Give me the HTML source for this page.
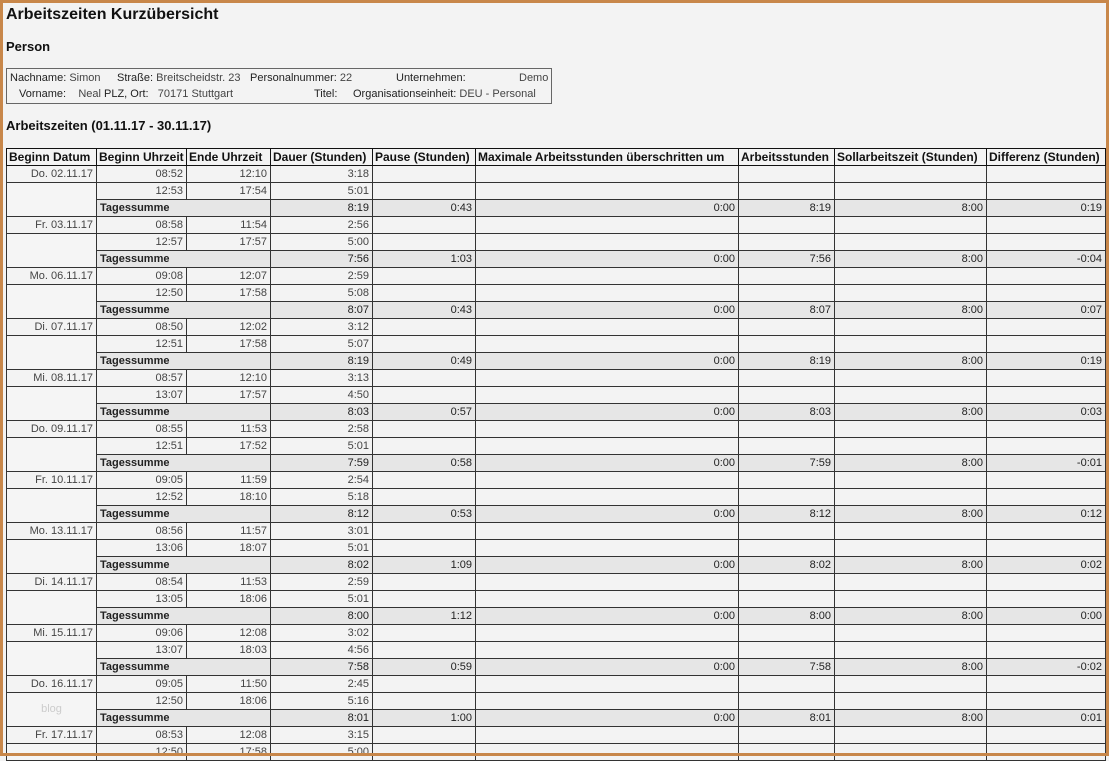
<!DOCTYPE html>
<html><head><meta charset="utf-8"><style>
html,body{margin:0;padding:0}
body{width:1109px;height:756px;overflow:hidden;background:#f3f3f3;font-family:"Liberation Sans",Arial,sans-serif;color:#222;position:relative}
.frame{position:absolute;left:0;top:0;width:1103px;height:750px;border:3px solid #c8874a;box-sizing:content-box;pointer-events:none;z-index:5}
h1{position:absolute;left:6px;top:6px;margin:0;font-size:16px;font-weight:bold;color:#111}
h2{position:absolute;left:6px;margin:0;font-size:13px;font-weight:bold;color:#111}
.info{position:absolute;left:6px;top:68px;width:544px;height:34px;border:1px solid #666;font-size:11px;color:#444}
.info span{position:absolute;white-space:nowrap}
.info b{font-weight:normal;color:#222}
table{position:absolute;left:6px;top:148px;border-collapse:collapse;table-layout:fixed;width:1099px;font-size:11px}
td,th{border:1px solid #333;padding:0 3px;height:16px;line-height:15px;white-space:nowrap;overflow:hidden;text-align:right;color:#444}
th{text-align:left;color:#111;font-weight:bold;border-color:#111;font-size:12px;padding:0 2px}
tr.s td{background:#e6e6e6;color:#222}
tr.s td.l{text-align:left;font-weight:bold}
td.d{background:#f5f5f5;vertical-align:top}
</style></head><body>
<div class="frame"></div>
<h1>Arbeitszeiten Kurzübersicht</h1>
<h2 style="top:39px">Person</h2>
<div class="info">
<span style="left:3px;top:3px"><b>Nachname:</b> Simon</span>
<span style="left:110px;top:3px"><b>Straße:</b> Breitscheidstr. 23</span>
<span style="left:243px;top:3px"><b>Personalnummer:</b> 22</span>
<span style="left:389px;top:3px"><b>Unternehmen:</b></span>
<span style="left:512px;top:3px">Demo</span>
<span style="left:12px;top:19px"><b>Vorname:</b>&nbsp;&nbsp;&nbsp; Neal <b>PLZ, Ort:</b>&nbsp;&nbsp; 70171 Stuttgart</span>
<span style="left:307px;top:19px"><b>Titel:</b></span>
<span style="left:346px;top:19px"><b>Organisationseinheit:</b> DEU - Personal</span>
</div>
<h2 style="top:118px">Arbeitszeiten (01.11.17 - 30.11.17)</h2>
<table>
<colgroup><col style="width:90px"><col style="width:90px"><col style="width:84px"><col style="width:102px"><col style="width:103px"><col style="width:263px"><col style="width:96px"><col style="width:152px"><col style="width:119px"></colgroup>
<tr><th>Beginn Datum</th><th>Beginn Uhrzeit</th><th>Ende Uhrzeit</th><th>Dauer (Stunden)</th><th>Pause (Stunden)</th><th>Maximale Arbeitsstunden überschritten um</th><th>Arbeitsstunden</th><th>Sollarbeitszeit (Stunden)</th><th>Differenz (Stunden)</th></tr>

<tr><td>Do. 02.11.17</td><td>08:52</td><td>12:10</td><td>3:18</td><td></td><td></td><td></td><td></td><td></td></tr>
<tr><td class="d" rowspan="2"></td><td>12:53</td><td>17:54</td><td>5:01</td><td></td><td></td><td></td><td></td><td></td></tr>
<tr class="s"><td class="l" colspan="2">Tagessumme</td><td>8:19</td><td>0:43</td><td>0:00</td><td>8:19</td><td>8:00</td><td>0:19</td></tr>

<tr><td>Fr. 03.11.17</td><td>08:58</td><td>11:54</td><td>2:56</td><td></td><td></td><td></td><td></td><td></td></tr>
<tr><td class="d" rowspan="2"></td><td>12:57</td><td>17:57</td><td>5:00</td><td></td><td></td><td></td><td></td><td></td></tr>
<tr class="s"><td class="l" colspan="2">Tagessumme</td><td>7:56</td><td>1:03</td><td>0:00</td><td>7:56</td><td>8:00</td><td>-0:04</td></tr>

<tr><td>Mo. 06.11.17</td><td>09:08</td><td>12:07</td><td>2:59</td><td></td><td></td><td></td><td></td><td></td></tr>
<tr><td class="d" rowspan="2"></td><td>12:50</td><td>17:58</td><td>5:08</td><td></td><td></td><td></td><td></td><td></td></tr>
<tr class="s"><td class="l" colspan="2">Tagessumme</td><td>8:07</td><td>0:43</td><td>0:00</td><td>8:07</td><td>8:00</td><td>0:07</td></tr>

<tr><td>Di. 07.11.17</td><td>08:50</td><td>12:02</td><td>3:12</td><td></td><td></td><td></td><td></td><td></td></tr>
<tr><td class="d" rowspan="2"></td><td>12:51</td><td>17:58</td><td>5:07</td><td></td><td></td><td></td><td></td><td></td></tr>
<tr class="s"><td class="l" colspan="2">Tagessumme</td><td>8:19</td><td>0:49</td><td>0:00</td><td>8:19</td><td>8:00</td><td>0:19</td></tr>

<tr><td>Mi. 08.11.17</td><td>08:57</td><td>12:10</td><td>3:13</td><td></td><td></td><td></td><td></td><td></td></tr>
<tr><td class="d" rowspan="2"></td><td>13:07</td><td>17:57</td><td>4:50</td><td></td><td></td><td></td><td></td><td></td></tr>
<tr class="s"><td class="l" colspan="2">Tagessumme</td><td>8:03</td><td>0:57</td><td>0:00</td><td>8:03</td><td>8:00</td><td>0:03</td></tr>

<tr><td>Do. 09.11.17</td><td>08:55</td><td>11:53</td><td>2:58</td><td></td><td></td><td></td><td></td><td></td></tr>
<tr><td class="d" rowspan="2"></td><td>12:51</td><td>17:52</td><td>5:01</td><td></td><td></td><td></td><td></td><td></td></tr>
<tr class="s"><td class="l" colspan="2">Tagessumme</td><td>7:59</td><td>0:58</td><td>0:00</td><td>7:59</td><td>8:00</td><td>-0:01</td></tr>

<tr><td>Fr. 10.11.17</td><td>09:05</td><td>11:59</td><td>2:54</td><td></td><td></td><td></td><td></td><td></td></tr>
<tr><td class="d" rowspan="2"></td><td>12:52</td><td>18:10</td><td>5:18</td><td></td><td></td><td></td><td></td><td></td></tr>
<tr class="s"><td class="l" colspan="2">Tagessumme</td><td>8:12</td><td>0:53</td><td>0:00</td><td>8:12</td><td>8:00</td><td>0:12</td></tr>

<tr><td>Mo. 13.11.17</td><td>08:56</td><td>11:57</td><td>3:01</td><td></td><td></td><td></td><td></td><td></td></tr>
<tr><td class="d" rowspan="2"></td><td>13:06</td><td>18:07</td><td>5:01</td><td></td><td></td><td></td><td></td><td></td></tr>
<tr class="s"><td class="l" colspan="2">Tagessumme</td><td>8:02</td><td>1:09</td><td>0:00</td><td>8:02</td><td>8:00</td><td>0:02</td></tr>

<tr><td>Di. 14.11.17</td><td>08:54</td><td>11:53</td><td>2:59</td><td></td><td></td><td></td><td></td><td></td></tr>
<tr><td class="d" rowspan="2"></td><td>13:05</td><td>18:06</td><td>5:01</td><td></td><td></td><td></td><td></td><td></td></tr>
<tr class="s"><td class="l" colspan="2">Tagessumme</td><td>8:00</td><td>1:12</td><td>0:00</td><td>8:00</td><td>8:00</td><td>0:00</td></tr>

<tr><td>Mi. 15.11.17</td><td>09:06</td><td>12:08</td><td>3:02</td><td></td><td></td><td></td><td></td><td></td></tr>
<tr><td class="d" rowspan="2"></td><td>13:07</td><td>18:03</td><td>4:56</td><td></td><td></td><td></td><td></td><td></td></tr>
<tr class="s"><td class="l" colspan="2">Tagessumme</td><td>7:58</td><td>0:59</td><td>0:00</td><td>7:58</td><td>8:00</td><td>-0:02</td></tr>

<tr><td>Do. 16.11.17</td><td>09:05</td><td>11:50</td><td>2:45</td><td></td><td></td><td></td><td></td><td></td></tr>
<tr><td class="d" rowspan="2" style="text-align:center;color:#ccc;vertical-align:middle">blog</td><td>12:50</td><td>18:06</td><td>5:16</td><td></td><td></td><td></td><td></td><td></td></tr>
<tr class="s"><td class="l" colspan="2">Tagessumme</td><td>8:01</td><td>1:00</td><td>0:00</td><td>8:01</td><td>8:00</td><td>0:01</td></tr>

<tr><td>Fr. 17.11.17</td><td>08:53</td><td>12:08</td><td>3:15</td><td></td><td></td><td></td><td></td><td></td></tr>
<tr><td class="d"></td><td>12:50</td><td>17:58</td><td>5:00</td><td></td><td></td><td></td><td></td><td></td></tr>
</table>
</body></html>
